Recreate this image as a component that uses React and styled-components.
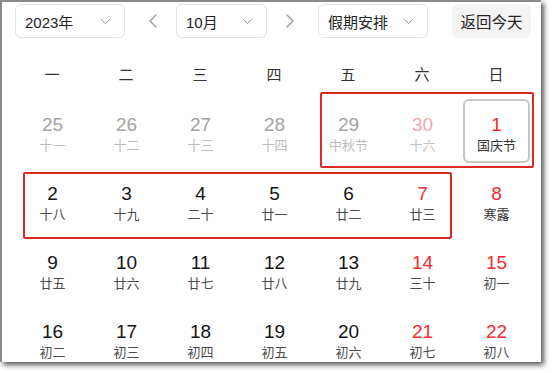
import React from 'react';
import styled, { createGlobalStyle } from 'styled-components';
import { ChevronDown, ChevronLeft, ChevronRight } from 'lucide-react';

const GlobalStyle = createGlobalStyle`
  html, body {
    margin: 0;
    padding: 0;
    background: #ffffff;
  }
  body {
    font-family: "Liberation Sans", "Noto Sans CJK SC", sans-serif;
  }
`;

const Frame = styled.div`
  width: 553px;
  height: 373px;
  overflow: hidden;
  background: #fff;
`;

const Panel = styled.div`
  width: 539px;
  height: 360px;
  border-top: 2px solid #8a8a8a;
  border-left: 2px solid #8a8a8a;
  box-shadow: 3px 3px 5px rgba(0, 0, 0, 0.65);
  background: #fff;
  overflow: hidden;
`;

const Toolbar = styled.div`
  display: flex;
  align-items: center;
  height: 34px;
  padding: 2px 0 0 13px;
`;

const Select = styled.div`
  box-sizing: border-box;
  display: flex;
  align-items: center;
  justify-content: space-between;
  width: ${p => p.width}px;
  height: 34px;
  padding: 0 10px 0 9px;
  border: 1px solid #e3e3e3;
  border-radius: 6px;
  font-size: 15px;
  color: #222;
`;

const NavButton = styled.div`
  display: flex;
  align-items: center;
  justify-content: center;
  width: 28px;
  margin: 0 ${p => p.right || 0}px 0 ${p => p.left || 0}px;
  color: #9a9a9a;
`;

const TodayButton = styled.div`
  box-sizing: border-box;
  display: flex;
  align-items: center;
  justify-content: center;
  width: 79px;
  height: 34px;
  margin-left: 24px;
  border-radius: 6px;
  background: #f4f4f4;
  font-size: 15.5px;
  color: #222;
`;

const Grid = styled.div`
  display: grid;
  grid-template-columns: repeat(7, 74px);
  grid-template-rows: 40px repeat(4, 69px);
  margin: 18px 0 0 13px;
  width: 518px;
`;

const WeekDay = styled.div`
  display: flex;
  justify-content: center;
  font-size: 15px;
  line-height: 17px;
  padding-top: 10px;
  color: #333;
`;

const Cell = styled.div`
  box-sizing: border-box;
  display: flex;
  flex-direction: column;
  align-items: center;
  justify-content: center;
  margin: 3px 3px 2px 4px;
  padding-top: 5px;
  border: 2px solid ${p => (p.selected ? '#c6c6c6' : 'transparent')};
  border-radius: 6px;
  grid-row: ${p => p.row};
  grid-column: ${p => p.col};
`;

const DayNum = styled.div`
  font-size: 19px;
  line-height: 22px;
  color: ${p => p.color};
`;

const Lunar = styled.div`
  font-size: 13px;
  line-height: 16px;
  margin-top: 2px;
  color: ${p => p.color};
`;

const Mark = styled.div`
  grid-row: ${p => p.row};
  grid-column: ${p => p.cols};
  margin: ${p => p.m};
  border: 2px solid #db2a22;
  border-radius: 2px;
  pointer-events: none;
  z-index: 2;
`;

const weekdays = ['一', '二', '三', '四', '五', '六', '日'];

// kind: prev | prevRed | cur | red
const days = [
  [25, '十一', 'prev'], [26, '十二', 'prev'], [27, '十三', 'prev'], [28, '十四', 'prev'],
  [29, '中秋节', 'prev'], [30, '十六', 'prevRed'], [1, '国庆节', 'red', true],
  [2, '十八', 'cur'], [3, '十九', 'cur'], [4, '二十', 'cur'], [5, '廿一', 'cur'],
  [6, '廿二', 'cur'], [7, '廿三', 'red'], [8, '寒露', 'red'],
  [9, '廿五', 'cur'], [10, '廿六', 'cur'], [11, '廿七', 'cur'], [12, '廿八', 'cur'],
  [13, '廿九', 'cur'], [14, '三十', 'red'], [15, '初一', 'red'],
  [16, '初二', 'cur'], [17, '初三', 'cur'], [18, '初四', 'cur'], [19, '初五', 'cur'],
  [20, '初六', 'cur'], [21, '初七', 'red'], [22, '初八', 'red'],
];

const numColor = {
  prev: '#a3a3a3',
  prevRed: '#f4a7ab',
  cur: '#141414',
  red: '#ee2d33',
};

const lunarColor = {
  prev: '#bcbcbc',
  prevRed: '#c4c4c4',
  cur: '#4a4a4a',
  red: '#4a4a4a',
};

export default function App() {
  return (
    <Frame>
      <GlobalStyle />
      <Panel>
        <Toolbar>
          <Select width={110}>
            2023年
            <ChevronDown size={17} strokeWidth={1.4} color="#9a9a9a" />
          </Select>
          <NavButton left={14} right={9}>
            <ChevronLeft size={24} strokeWidth={1.4} />
          </NavButton>
          <Select width={91}>
            10月
            <ChevronDown size={17} strokeWidth={1.4} color="#9a9a9a" />
          </Select>
          <NavButton left={9} right={14}>
            <ChevronRight size={24} strokeWidth={1.4} />
          </NavButton>
          <Select width={110}>
            假期安排
            <ChevronDown size={17} strokeWidth={1.4} color="#9a9a9a" />
          </Select>
          <TodayButton>返回今天</TodayButton>
        </Toolbar>
        <Grid>
          {weekdays.map(w => (
            <WeekDay key={w}>{w}</WeekDay>
          ))}
          {days.map(([n, lunar, kind, selected], i) => (
            <Cell key={i} row={Math.floor(i / 7) + 2} col={(i % 7) + 1} selected={selected}>
              <DayNum color={numColor[kind]}>{n}</DayNum>
              <Lunar color={lunar === '寒露' || lunar === '国庆节' ? '#333' : lunarColor[kind]}>{lunar}</Lunar>
            </Cell>
          ))}
          <Mark row={2} cols="5 / 8" m="-4px -1px -3px 9px" />
          <Mark row={3} cols="1 / 7" m="7px 7px -5px 8px" />
        </Grid>
      </Panel>
    </Frame>
  );
}
